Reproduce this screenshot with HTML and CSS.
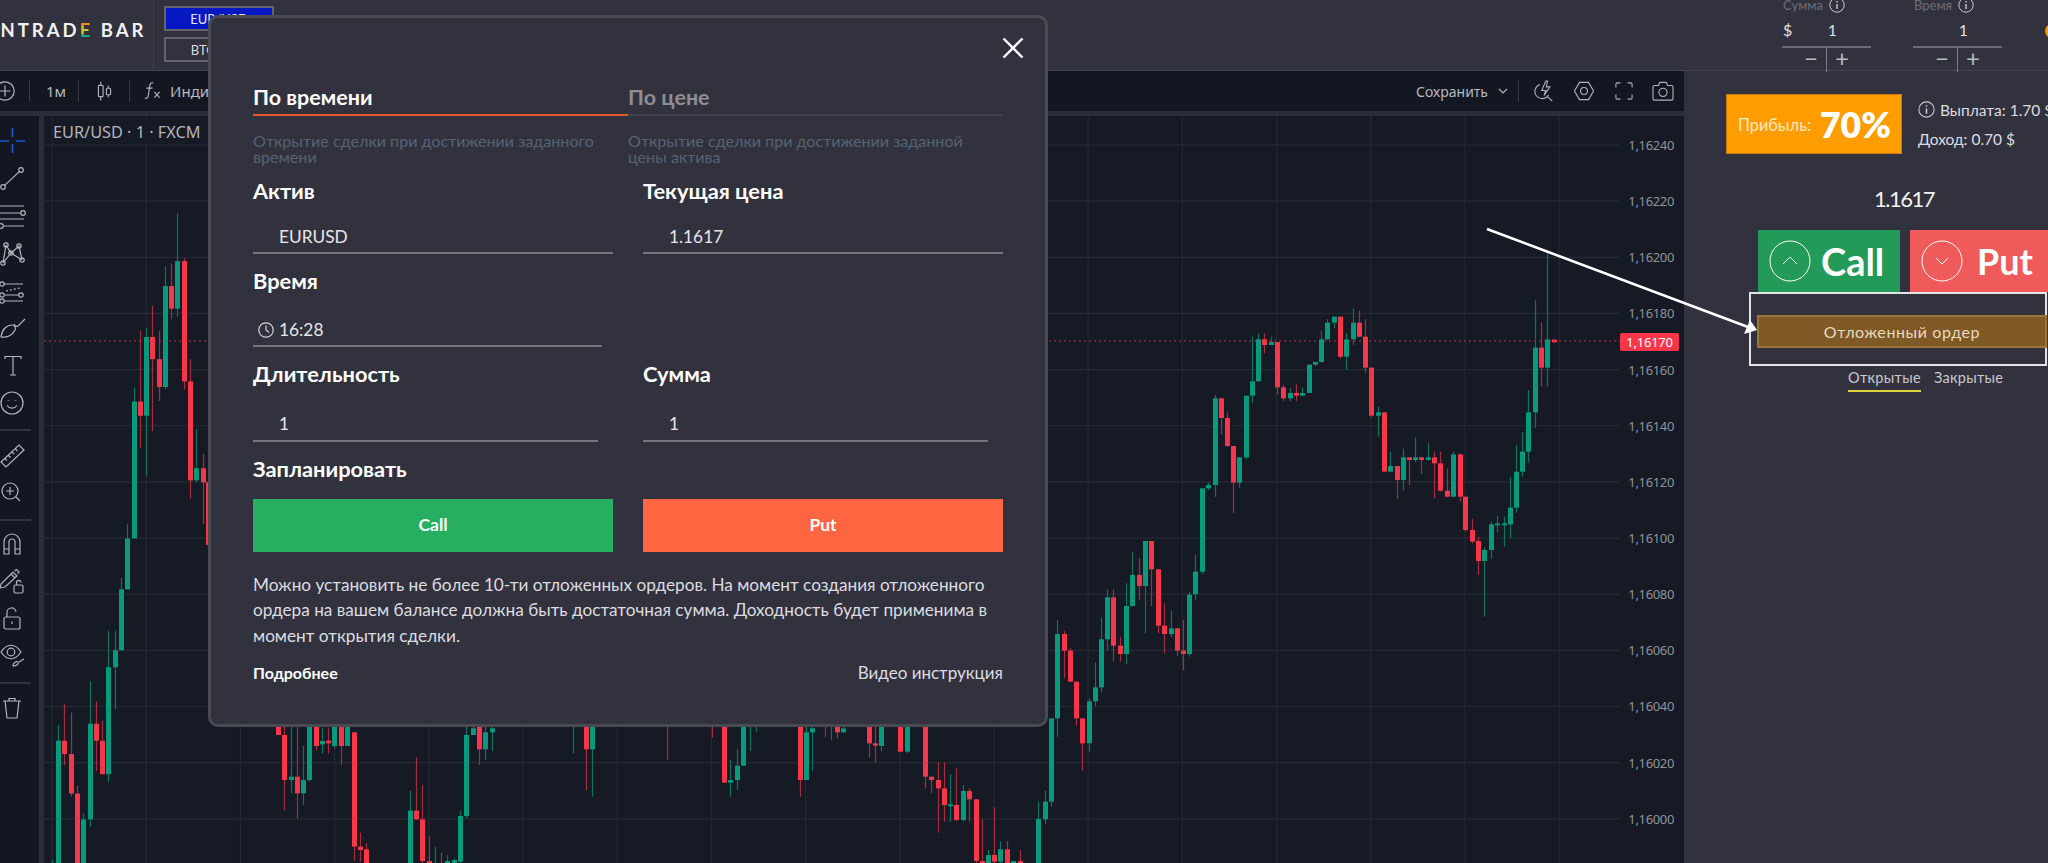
FILE: index.html
```html
<!DOCTYPE html>
<html lang="ru">
<head>
<meta charset="utf-8">
<title>Intrade Bar</title>
<link rel="stylesheet" href="styles.css">
</head>
<body>
<header class="topbar">
  <div class="logo-cell"><span class="logo">INTRAD<span class="logo-e">E</span> BAR</span></div>
  <div class="pairs">
    <div class="pair pair-active">EUR/USD</div>
    <div class="pair">BTC/USD</div>
  </div>
  <div class="steppers">
    <div class="stepper">
      <div class="stepper-label">Сумма <svg class="info" viewBox="0 0 16 16"><circle cx="8" cy="8" r="7.2"/><path d="M8 7v5M8 4v1.4"/></svg></div>
      <div class="stepper-value"><span class="stepper-cur">$</span><span>1</span></div>
      <div class="stepper-ctrl"><span class="ctrl-minus">−</span><span class="ctrl-plus">+</span></div>
    </div>
    <div class="stepper">
      <div class="stepper-label">Время <svg class="info" viewBox="0 0 16 16"><circle cx="8" cy="8" r="7.2"/><path d="M8 7v5M8 4v1.4"/></svg></div>
      <div class="stepper-value"><span class="stepper-cur"></span><span>1</span></div>
      <div class="stepper-ctrl"><span class="ctrl-minus">−</span><span class="ctrl-plus">+</span></div>
    </div>
    <div class="orange-dot"></div>
  </div>
</header>

<div class="workspace">
  <div class="chart-col">
    <div class="toolbar">
      <svg class="tb-plus" viewBox="0 0 20 20"><circle cx="10" cy="10" r="9.2"/><path d="M10 4.5v11M4.5 10h11"/></svg>
      <span class="tb-sep"></span>
      <span class="tb-text tb-interval">1м</span>
      <span class="tb-sep"></span>
      <svg class="tb-candles" viewBox="0 0 16 22"><path d="M4 1v4M4 17v4M12 5v3M12 15v3"/><rect x="1.5" y="5" width="5" height="12" rx="1"/><rect x="10" y="8" width="4.5" height="7" rx="1"/></svg>
      <span class="tb-sep"></span>
      <svg class="tb-fx" viewBox="0 0 18 20"><path d="M10 1.5C7.5.8 6.5 2 6.2 4L4.5 15c-.3 2-1.5 3.3-3.5 2.6M2.5 7H9M11 11l5.5 6M16.5 11L11 17"/></svg>
      <span class="tb-text tb-ind">Индикаторы</span>
      <div class="tb-right">
        <span class="tb-text">Сохранить</span>
        <svg class="tb-chevron" viewBox="0 0 10 6"><path d="M1 1l4 4 4-4"/></svg>
        <span class="tb-sep"></span>
        <svg class="tb-icon tb-bolt" viewBox="0 0 22 24"><path d="M6.500 4.800a8 8 0 1 0 9.500 11.500M14.500 18l5.500 5M13 1L8.500 11.500H13l-2 5.500 6.500-9.500H13.500l1.500-6.500z"/></svg>
        <svg class="tb-icon tb-hex" viewBox="0 0 24 22"><path d="M7 1.500h10l5.500 9.500L17 20.500H7L1.500 11z"/><circle cx="12" cy="11" r="3.800"/></svg>
        <svg class="tb-icon tb-full" viewBox="0 0 20 20"><path d="M1 6V2.500A1.500 1.500 0 0 1 2.500 1H6M14 1h3.500A1.500 1.500 0 0 1 19 2.500V6M19 14v3.500a1.500 1.500 0 0 1-1.500 1.500H14M6 19H2.500A1.500 1.500 0 0 1 1 17.500V14"/></svg>
        <svg class="tb-icon tb-cam" viewBox="0 0 24 22"><path d="M2.500 5H7l1.500-3.500h7L17 5h4.500A1.500 1.500 0 0 1 23 6.500v13a1.500 1.500 0 0 1-1.500 1.500h-19A1.500 1.500 0 0 1 1 19.500v-13A1.500 1.500 0 0 1 2.500 5z"/><circle cx="12" cy="12.500" r="4.500"/></svg>
      </div>
    </div>
    <div class="chart-row">
      <aside class="tools">
        <svg class="tool tool-blue" viewBox="0 0 26 26"><path d="M0 13h9M16 13h9M12.500 0v9M12.500 16v9"/></svg>
        <svg class="tool" viewBox="0 0 26 26"><circle cx="21" cy="5" r="2.300"/><circle cx="3" cy="22" r="2.300"/><path d="M19.300 6.600L4.700 20.400"/></svg>
        <svg class="tool" viewBox="0 0 26 26"><path d="M0 3h24M0 10h20.500M0 16h24M3.500 23H24"/><circle cx="23" cy="10" r="2.300"/><circle cx="1" cy="23" r="2.300"/></svg>
        <svg class="tool" viewBox="0 0 26 26"><path d="M6 5L3 23M6 5l5 8 8-7 3 14M3 23l8-10 11 7"/><circle cx="6" cy="5" r="2.200"/><circle cx="19" cy="6" r="2.200"/><circle cx="3" cy="23" r="2.200"/><circle cx="22" cy="20" r="2.200"/><circle cx="11" cy="13" r="2.200"/></svg>
        <svg class="tool" viewBox="0 0 26 26"><path d="M4 6h19M5 17h14M4 23h19"/><path class="tool-dash" d="M6 13l14-3"/><circle cx="2" cy="6" r="2.200"/><circle cx="2" cy="17" r="2.200"/><circle cx="21" cy="17" r="2.200"/><circle cx="2" cy="23" r="2.200"/></svg>
        <svg class="tool" viewBox="0 0 26 26"><path d="M1 22c1-8 6-12 11-12 3 0 4 3 3 5-2 5-8 8-14 7zM14 9c1 3 4 3 5 1l6-6"/></svg>
        <svg class="tool" viewBox="0 0 26 26"><path d="M5 6V3.500h16V6M13 3.500V22M10 22h6"/></svg>
        <svg class="tool" viewBox="0 0 26 26"><circle cx="12" cy="13" r="11"/><path d="M7 15.500c2.500 3.500 7.500 3.500 10 0"/><path class="tool-dot" d="M8.500 10.500v.5M15.500 10.500v.5"/></svg>
        <div class="tool-sep"></div>
        <svg class="tool" viewBox="0 0 26 26"><path d="M1 19L19 2l5 5L6 24zM5 15.500l2 2M8.500 12.500l2 2M12 9l2 2M15.500 6l2 2"/></svg>
        <svg class="tool" viewBox="0 0 26 26"><circle cx="10" cy="11" r="8"/><path d="M16 17l4 4M10 7v8M6 11h8"/></svg>
        <div class="tool-sep tool-sep-b"></div>
        <svg class="tool" viewBox="0 0 26 26"><path d="M4 24v-12a8 8 0 0 1 16 0v12h-5v-12a3 3 0 0 0-6 0v12zM4 19h5M15 19h5"/></svg>
        <svg class="tool" viewBox="0 0 26 26"><path d="M1 17L13 5l4 4L5 20l-5 1zM11 7l4 4M14.500 4l2-1.500 2.500 2.500-1.500 2"/><rect x="14" y="18" width="9" height="8" rx="1.500"/><path d="M16.500 18v-2.500a2.200 2.200 0 0 1 4.400 0"/></svg>
        <svg class="tool" viewBox="0 0 26 26"><rect x="4" y="12" width="16" height="12" rx="2"/><path d="M7 12V8a4.500 4.500 0 0 1 9-1M12 16.500v2.500"/></svg>
        <svg class="tool" viewBox="0 0 26 26"><path d="M1 10c6-9 14-9 20 0-6 9-14 9-20 0z"/><circle cx="11" cy="10" r="3.800"/><path d="M13 24c0-3 3-5 5-4 1 2-1 4-5 4zM19 20l5-3"/></svg>
        <div class="tool-sep tool-sep-c"></div>
        <svg class="tool" viewBox="0 0 26 26"><path d="M3 6h18M5 6l2 17h10l2-17M9 6V3.500h6V6"/></svg>
      </aside>
      <div class="chart">
        <svg id="plot" class="plot" viewBox="44 116 1640 747"></svg>
        <div class="chart-title">EUR/USD · 1 · FXCM</div>
        <div class="axis">
          <span>1,16240</span><span>1,16220</span><span>1,16200</span><span>1,16180</span><span>1,16160</span><span>1,16140</span><span>1,16120</span><span>1,16100</span><span>1,16080</span><span>1,16060</span><span>1,16040</span><span>1,16020</span><span>1,16000</span>
        </div>
        <div class="price-tag">1,16170</div>
      </div>
    </div>
  </div>

  <aside class="panel">
    <div class="profit-row">
      <div class="profit-box"><span class="profit-label">Прибыль:</span><span class="profit-value">70%</span></div>
      <div class="payout">
        <div class="payout-line payout-first"><svg class="info info-lg" viewBox="0 0 16 16"><circle cx="8" cy="8" r="7.200"/><path d="M8 7v5M8 4v1.400"/></svg>Выплата: 1.70 $</div>
        <div class="payout-line">Доход: 0.70 $</div>
      </div>
    </div>
    <div class="live-price">1.1617</div>
    <div class="trade-row">
      <div class="trade trade-call">
        <svg class="trade-icon" viewBox="0 0 42 42"><circle cx="21" cy="21" r="20"/><path d="M14 24l7-7 7 7"/></svg>
        <span>Call</span>
      </div>
      <div class="trade trade-put">
        <svg class="trade-icon" viewBox="0 0 42 42"><circle cx="21" cy="21" r="20"/><path d="M15 18l6 6 6-6"/></svg>
        <span>Put</span>
      </div>
    </div>
    <div class="pending-frame"><div class="pending-btn">Отложенный ордер</div></div>
    <div class="deal-tabs"><span class="deal-tab deal-tab-on">Открытые</span><span class="deal-tab">Закрытые</span></div>
  </aside>
</div>

<svg class="arrow" viewBox="0 0 290 120"><path class="arrow-line" d="M7 9L268 107"/><path class="arrow-head" d="M277 110L264 114L270 100z"/></svg>

<section class="modal">
  <svg class="modal-close" viewBox="0 0 22 22"><path d="M1.500 1.500l19 19M20.500 1.500l-19 19"/></svg>
  <div class="tabs">
    <div class="tab tab-on">По времени</div>
    <div class="tab">По цене</div>
  </div>
  <div class="tab-descs">
    <p class="tab-desc">Открытие сделки при достижении заданного времени</p>
    <p class="tab-desc">Открытие сделки при достижении заданной цены актива</p>
  </div>
  <div class="fields">
    <div class="field">
      <div class="field-label">Актив</div>
      <div class="field-input">EURUSD</div>
    </div>
    <div class="field">
      <div class="field-label">Текущая цена</div>
      <div class="field-input">1.1617</div>
    </div>
    <div class="field field-time">
      <div class="field-label">Время</div>
      <div class="field-input field-input-time"><svg class="clock" viewBox="0 0 16 16"><circle cx="8" cy="8" r="7.200"/><path d="M8 3.500V8l3 2.500"/></svg>16:28</div>
    </div>
    <div class="field"></div>
    <div class="field field-dur">
      <div class="field-label">Длительность</div>
      <div class="field-input field-input-dur">1</div>
    </div>
    <div class="field field-dur">
      <div class="field-label">Сумма</div>
      <div class="field-input field-input-dur">1</div>
    </div>
  </div>
  <div class="field-label schedule">Запланировать</div>
  <div class="actions">
    <div class="action action-call">Call</div>
    <div class="action action-put">Put</div>
  </div>
  <p class="note">Можно установить не более 10-ти отложенных ордеров. На момент создания отложенного ордера на вашем балансе должна быть достаточная сумма. Доходность будет применима в момент открытия сделки.</p>
  <div class="modal-links">
    <span class="link-more">Подробнее</span>
    <span class="link-video">Видео инструкция</span>
  </div>
</section>
<script src="chart.js"></script>
</body>
</html>
```
FILE: styles.css
```css
* { box-sizing: border-box; }
html, body { margin: 0; height: 100%; }
body {
  width: 2048px; height: 863px; overflow: hidden; position: relative;
  background: #32323e; color: #fff;
  font-family: "Lato", "Noto Sans", sans-serif;
}
svg { display: block; fill: none; stroke: #b2b4bb; stroke-width: 1.2; }

/* top bar */
.topbar { height: 71px; display: flex; border-bottom: 1px solid #44454f; background: #32323e; }
.logo-cell { width: 154px; flex: none; border-right: 1px solid #3f3f4b; display: flex; align-items: center; padding-bottom: 10px; overflow: hidden; }
.logo { margin-left: -8px; font-size: 18.5px; font-weight: 700; letter-spacing: 3px; white-space: nowrap; color: #f1f1f1; }
.logo-e { background: linear-gradient(#f08a1c 0 33%, #c7c82f 33% 66%, #22a88a 66%); -webkit-background-clip: text; background-clip: text; color: transparent; }
.pairs { margin-left: 10px; padding-top: 6px; display: flex; flex-direction: column; gap: 6px; }
.pair { width: 110px; height: 25px; border: 2px solid #63636d; font-size: 13px; color: #d9d9de; display: flex; align-items: center; justify-content: center; }
.pair-active { background: #0518c4; color: #e8e8f6; }
.steppers { margin-left: auto; display: flex; gap: 42px; margin-top: -3px; height: 76px; position: relative; }
.stepper { width: 89px; font-size: 14px; }
.stepper-label { height: 16px; display: flex; align-items: center; gap: 6px; color: #6c6d78; font-size: 13px; padding-left: 1px; }
.info { width: 16px; height: 16px; stroke: #c9c9cf; stroke-width: 1; }
.info path { stroke-width: 1.4; }
.stepper-value { height: 35px; display: flex; align-items: center; border-bottom: 2px solid #6a6a74; color: #e4e4e8; font-size: 15px; }
.stepper-cur { width: 46px; padding-left: 1px; font-size: 16px; }
.stepper-ctrl { height: 24px; display: grid; grid-template-columns: 45px 1fr; color: #b9b9c0; font-size: 24px; line-height: 20px; }
.ctrl-minus { border-right: 1px solid #7a7a84; text-align: right; padding-right: 8px; }
.ctrl-plus { padding-left: 8px; }
.orange-dot { width: 14px; height: 14px; border-radius: 50%; background: #ff9d00; margin: 27px -11px 0 1px; }

/* workspace */
.workspace { height: 792px; display: flex; }
.chart-col { width: 1684px; flex: none; background: #2a2e39; display: flex; flex-direction: column; overflow: hidden; }
.toolbar { height: 40px; flex: none; background: #131722; display: flex; align-items: center; color: #b7b9c0; font-family: "Noto Sans", sans-serif; font-size: 14px; }
.tb-plus { width: 20px; height: 20px; margin-left: -5px; margin-right: 14px; flex: none; }
.tb-sep { width: 1px; height: 22px; background: #343844; flex: none; }
.tb-text { white-space: nowrap; }
.tb-interval { margin: 0 12px 0 16px; font-size: 15px; }
.tb-candles { width: 15px; height: 22px; margin: 0 17px 0 18px; flex: none; }
.tb-fx { width: 17px; height: 20px; margin-left: 14px; flex: none; }
.tb-ind { margin-left: 9px; font-size: 15px; }
.tb-right { margin-left: auto; display: flex; align-items: center; padding-right: 10px; }
.tb-chevron { width: 10px; height: 6px; margin: 0 10px 0 10px; }
.tb-icon { flex: none; }
.tb-bolt { width: 20px; height: 22px; margin-left: 15px; }
.tb-hex { width: 22px; height: 20px; margin-left: 19px; }
.tb-full { width: 18px; height: 18px; margin-left: 20px; }
.tb-cam { width: 22px; height: 20px; margin-left: 19px; }
.chart-row { flex: 1; margin-top: 5px; display: flex; gap: 5px; min-height: 0; }
.tools { width: 39px; flex: none; background: #131722; padding-top: 6px; display: flex; flex-direction: column; overflow: hidden; }
.tool { width: 26px; height: 26px; margin: 5.75px 0; overflow: visible; flex: none; }
.tool-blue { stroke: #2b55c9; stroke-width: 1.6; }
.tool-dash { stroke-dasharray: 2 2; }
.tool-dot { stroke-width: 2; }
.tool-sep { height: 2px; width: 31px; background: #30343f; margin: 7px 0 6px; flex: none; }
.tool-sep-b { margin: 7px 0 3px; }
.tool-sep-c { margin: 8px 0 5px; }
.chart { flex: 1; background: #161a25; position: relative; overflow: hidden; }
.plot { position: absolute; inset: 0; width: 1640px; height: 747px; stroke: none; }
.chart-title { position: absolute; left: 9px; top: 5px; font: 16.3px/22px "Noto Sans", sans-serif; color: #b2b5be; background: #161a25; }
.axis { position: absolute; right: 10px; top: 1px; display: flex; flex-direction: column; font: 13px/56.15px "Noto Sans", sans-serif; letter-spacing: -.35px; color: #8f929b; }
.axis span { height: 56.15px; }
.price-tag { position: absolute; left: 1576px; top: 217px; width: 59px; height: 18px; border-radius: 2px; background: #f7364a; font: 13px/18px "Noto Sans", sans-serif; letter-spacing: -.2px; text-align: center; color: #fff; }

/* right panel */
.panel { flex: 1; background: #32323e; padding-top: 23px; overflow: hidden; min-width: 0; }
.profit-row { display: flex; margin-left: 42px; }
.profit-box { width: 176px; height: 60px; flex: none; background: #ff9d00; border: 1px solid #c47a10; display: flex; align-items: center; padding-left: 11px; gap: 9px; }
.profit-label { font-size: 16.3px; color: #ffe8c4; }
.profit-value { font-size: 35.5px; font-weight: 800; }
.payout { margin-left: 16px; font-size: 15.5px; color: #dcdce0; white-space: nowrap; }
.payout-line { height: 29px; display: flex; align-items: center; }
.payout-first { margin-top: 1px; }
.info-lg { width: 17px; height: 17px; margin-right: 5px; flex: none; }
.live-price { margin: 30px 0 0 74px; width: 292px; height: 30px; text-align: center; font-size: 22px; letter-spacing: -1.5px; line-height: 30px; color: #f2f2f2; }
.trade-row { margin: 16px 0 0 74px; display: flex; gap: 10px; }
.trade { height: 62px; flex: none; display: flex; align-items: center; font-size: 38px; font-weight: 700; color: #fff; }
.trade-call { width: 142px; background: #239a58; padding-left: 11px; gap: 10px; }
.trade-put { width: 140px; background: #ef5a5a; padding-left: 11px; gap: 14px; font-size: 36px; }
.trade-icon { width: 42px; height: 42px; stroke: #fff; stroke-width: 1; flex: none; }
.pending-frame { margin-left: 65px; width: 298px; height: 74px; border: 2px solid #e4e4e6; padding: 21px 0 0 6px; }
.pending-btn { width: 290px; height: 33px; background: #7f5a26; border: 2px solid #9d7538; display: flex; align-items: center; justify-content: center; font-size: 16px; letter-spacing: .6px; color: #ead9bf; }
.deal-tabs { margin: 2px 0 0 164px; display: flex; gap: 13px; font-size: 14.5px; letter-spacing: .3px; color: #c9c9cf; }
.deal-tab { height: 24px; line-height: 20px; }
.deal-tab-on { border-bottom: 2px solid #dcd43a; }

/* arrow */
.arrow { position: absolute; left: 1480px; top: 220px; width: 290px; height: 120px; overflow: visible; }
.arrow-line { stroke: #fff; stroke-width: 2.6; }
.arrow-head { fill: #fff; stroke: none; }

/* modal */
.modal { position: absolute; left: 208px; top: 15px; width: 840px; height: 712px; padding: 67px 42px 0; background: #32323e; border: 3px solid #4a4a53; border-radius: 10px; }
.modal-close { position: absolute; right: 21px; top: 19px; width: 22px; height: 22px; stroke: #fff; stroke-width: 2.4; }
.tabs { display: grid; grid-template-columns: 375px 375px; }
.tab { height: 31px; padding-bottom: 5px; font-size: 21.5px; font-weight: 700; line-height: 24px; color: #8d8d95; border-bottom: 2px solid #42424d; }
.tab-on { color: #fff; border-bottom-color: #e8572f; }
.tab-descs { margin-top: 17px; display: grid; grid-template-columns: 375px 375px; }
.tab-desc { margin: 0; width: 360px; font-size: 16.1px; line-height: 16px; color: #556274; }
.fields { display: grid; grid-template-columns: 360px 360px; column-gap: 30px; margin-top: 15px; }
.field-label { height: 24px; padding-bottom: 2px; font-size: 21.8px; font-weight: 700; line-height: 22px; color: #fff; white-space: nowrap; }
.field-input { height: 50px; padding: 23px 0 0 26px; border-bottom: 2px solid #74747c; font-size: 17.3px; line-height: 20px; color: #e6e6ea; display: flex; }
.field-time { margin-top: 16px; }
.field-input-time { width: 349px; height: 53px; padding: 21px 0 0 5px; gap: 5px; align-items: center; }
.clock { width: 16px; height: 16px; stroke: #d4d4d8; flex: none; }
.field-dur { margin-top: 16px; }
.field-input-dur { width: 345px; height: 55px; padding-top: 27px; }
.schedule { margin-top: 16px; }
.actions { margin-top: 17px; display: grid; grid-template-columns: 360px 360px; column-gap: 30px; }
.action { height: 53px; padding-bottom: 3px; display: flex; align-items: center; justify-content: center; font-size: 17.5px; font-weight: 700; color: #fff; }
.action-call { background: #27ae60; }
.action-put { background: #ff6540; }
.note { margin: 20px 0 0; font-size: 17.2px; line-height: 25.3px; color: #dcdce0; }
.modal-links { margin-top: 15px; display: flex; justify-content: space-between; align-items: center; line-height: 20px; }
.link-more { font-size: 16px; font-weight: 700; }
.link-video { font-size: 17px; color: #dcdce0; }
```
FILE: chart.js
```js
// [x, colour, bodyTop, bodyBottom, wickTop, wickBottom] measured in each source scale
var groups = [
  { x0: 1040, sx: 2.412, y0: 220, sy: 3, c: [
    [1239,'r',359,367,359,367],[1224,'g',358,443,100,500],[1209,'r',383,443,308,500],[1194,'g',383,577,240,625],
    [1178,'g',577,695,510,728],[1163,'g',695,755,637,770],[1148,'g',755,863,675,878],[1133,'g',863,913,770,955],
    [1118,'g',910,914,890,980],[1103,'g',910,914,888,938],[1088,'g',913,990,905,1015],[1072,'g',990,1023,982,1190],
    [1057,'r',963,1023,950,1065],[1042,'r',930,965,897,970],[1026,'r',830,930,830,935],[1012,'r',703,830,700,845],
    [997,'g',703,830,695,830],[982,'r',812,830,745,832],[966,'r',730,812,695,815],[951,'r',712,730,695,835],
    [936,'g',712,720,670,722],[920,'r',712,720,712,762],[905,'g',712,720,652,727],[890,'r',712,720,712,795],
    [875,'g',712,780,686,812],[860,'r',738,780,738,837],[845,'g',738,755,695,755],[830,'r',577,755,577,755],
    [815,'g',577,587,560,650],[799,'r',443,587,443,593],[784,'r',350,443,298,458],[769,'r',308,350,272,352],
    [754,'g',308,358,265,375],[739,'g',358,410,340,450],[724,'r',290,410,290,415],[708,'g',290,308,290,325],
    [693,'g',308,358,298,360],[678,'g',358,426,332,428],[663,'g',426,434,426,437],[648,'g',434,519,434,519],
    [633,'g',519,527,502,527],[618,'r',519,527,493,543],[603,'g',519,535,505,543],[587,'r',502,535,495,543],
    [572,'r',366,502,366,525],[557,'g',366,375,350,375],[541,'r',358,375,340,400],[526,'g',358,484,340,484],
    [511,'g',484,527,350,550],[496,'g',527,712,527,718],[481,'g',712,788,712,803],[466,'r',678,788,678,878],
    [451,'r',594,678,577,680],[436,'r',535,594,535,643],[421,'g',535,795,525,830],[406,'g',795,805,787,810],
    [391,'g',805,1055,805,1062],[375,'g',1055,1123,1005,1140]
  ]},
  { x0: 1040, sx: 2.412, y0: 560, sy: 3, c: [
    [360,'g',104,282,95,290],[345,'r',272,282,180,330],[330,'r',205,272,205,288],[315,'g',205,222,152,232],
    [299,'r',197,222,130,280],[284,'r',28,197,28,220],[268,'r',-57,28,-57,138],[253,'g',-57,78,-57,220],
    [238,'r',45,78,-5,120],[223,'g',45,138,-23,140],[208,'g',138,282,70,312],[192,'r',257,282,230,305],
    [177,'r',112,257,88,305],[162,'g',112,238,88,270],[147,'g',238,382,172,398],[132,'g',382,424,307,438],
    [117,'g',424,550,415,575],[102,'r',475,550,475,633],[87,'r',365,475,365,498],[72,'r',272,365,265,365],
    [57,'r',222,272,213,355],[42,'g',222,475,180,530],[27,'g',475,725,475,740],[12,'g',725,778,692,792]
  ]},
  { x0: 200, sx: 1.823, y0: 710, sy: 3, c: [
    [142,'r',0,75,0,75],[154,'r',75,210,0,302],[165,'g',200,210,0,250],[177,'r',200,250,50,326],[188,'g',210,250,108,285],
    [199,'g',0,210,0,215],[211,'r',0,108,0,120],[222,'g',93,103,55,130],[234,'r',92,100,55,130],[245,'g',0,108,0,115],
    [257,'r',0,108,0,165],[268,'g',0,108,0,108],[280,'r',67,410,67,452],[291,'r',410,420,368,455],[303,'r',418,480,400,480],
    [382,'g',302,480,243,480],[394,'r',302,328,142,330],[405,'r',328,453,225,480],[417,'r',453,480,378,480],
    [428,'g',470,480,410,480],[440,'r',470,480,428,480],[451,'g',453,480,435,480],[463,'g',450,480,445,480],
    [474,'g',318,455,302,460],[485,'g',75,318,50,325],[497,'g',55,75,0,75],[509,'r',0,118,0,165],[520,'g',67,118,0,150],
    [532,'g',55,67,0,123],[680,'g',40,40,40,130],[703,'r',0,118,0,242],[715,'g',0,118,0,260],[852,'r',40,40,40,150],
    [933,'r',40,40,40,83],[956,'r',0,218,0,218],[967,'g',210,218,150,260],[979,'g',167,210,117,240],[990,'g',0,167,0,167],
    [1002,'g',40,40,40,123],[1013,'g',40,40,40,65],[1093,'r',0,210,0,260],[1105,'g',67,210,0,210],[1116,'g',55,67,0,183],
    [1139,'r',40,40,40,80],[1150,'g',40,40,40,90],[1162,'r',0,67,0,85],[1173,'g',55,67,0,67],[1219,'r',0,100,0,142],
    [1230,'r',100,107,0,157],[1242,'g',0,108,0,123],[1277,'r',0,125,0,125],[1288,'g',0,125,0,130],[1322,'r',0,200,0,235],
    [1333,'r',200,210,200,250],[1345,'r',210,235,157,368],[1356,'r',235,285,157,335],[1368,'g',283,287,193,335],
    [1379,'r',285,330,175,335],[1391,'g',243,330,225,335],[1402,'r',243,268,235,335],[1414,'r',268,453,268,480],
    [1425,'r',453,480,328,480],[1437,'g',435,480,420,480],[1448,'r',435,455,292,480],[1459,'g',418,455,395,460],
    [1471,'r',418,480,393,480],[1482,'g',453,480,453,480],[1494,'r',453,480,420,480],[1528,'g',327,480,275,480]
  ]},
  { x0: 40, sx: 3, y0: 230, sy: 2.477, c: [
    [36,'g',1640,1640,1560,1640],[54,'g',1265,1640,1225,1640],[73,'r',1265,1298,1175,1326],[92,'r',1298,1396,1195,1403],
    [111,'r',1396,1640,1376,1640],[130,'g',1460,1640,1445,1640],[149,'g',1223,1460,1118,1478],[167,'r',1223,1265,1168,1340],
    [186,'r',1265,1348,1215,1348],[205,'g',1083,1348,993,1368],[224,'g',1041,1083,993,1187],[243,'g',890,1041,862,1041],
    [261,'g',764,890,728,890],[281,'g',425,764,390,764],[299,'r',425,460,250,540],[318,'g',265,460,243,610],
    [337,'r',265,320,187,498],[356,'r',320,389,250,423],[375,'g',139,389,90,394],[393,'r',139,195,83,220],
    [412,'g',77,195,-42,215],[431,'r',77,375,70,395],[450,'r',375,620,320,665],[469,'g',590,620,493,625],
    [488,'r',590,625,555,728],[503,'r',625,780,625,780]
  ]}
];

var out = [];
var i;
for (i = 0; i < 17; i++) {
  var gx = 52 + 94.2 * i;
  out.push('<path d="M' + gx + ' 116V863" stroke="#242833"/>');
}
for (i = 0; i < 13; i++) {
  var gy = 145 + 56.15 * i;
  out.push('<path d="M44 ' + gy + 'H1620" stroke="#262a35"/>');
}
out.push('<path d="M44 341H1620" stroke="#c23340" stroke-dasharray="2 3"/>');
groups.forEach(function (g) {
  g.c.forEach(function (k) {
    var x = g.x0 + k[0] / g.sx;
    var y = function (v) { return g.y0 + v / g.sy; };
    var body = k[1] === 'g' ? '#079a7c' : '#f7364a';
    var wick = k[1] === 'g' ? '#0b7362' : '#a82d3c';
    var cx = Math.round(x);
    out.push('<path d="M' + (cx + 0.5) + ' ' + y(k[4]) + 'V' + y(k[5]) + '" stroke="' + wick + '"/>');
    if (k[3] > k[2]) {
      out.push('<rect x="' + (cx - 2) + '" y="' + y(k[2]) + '" width="5" height="' + Math.max(y(k[3]) - y(k[2]), 2) + '" fill="' + body + '"/>');
    }
  });
});
document.getElementById('plot').innerHTML = out.join('');
```
